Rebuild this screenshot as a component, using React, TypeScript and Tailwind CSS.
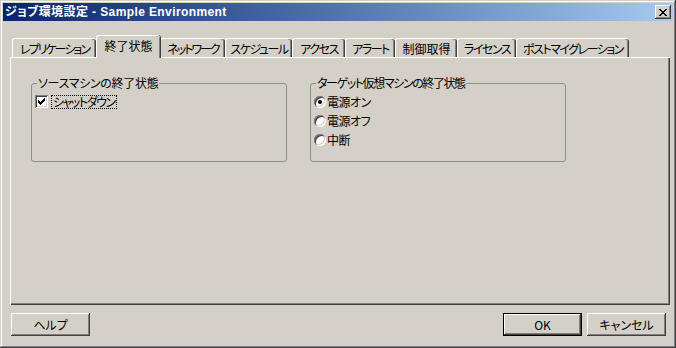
const raised =
  "shadow-[inset_-1px_-1px_#404040,inset_1px_1px_#ffffff,inset_-2px_-2px_#808080,inset_2px_2px_#d4d0c8]";

const tabs = [
  { label: "レプリケーション", w: "w-[84px]", t: "tracking-[-2px]" },
  { label: "終了状態", w: "w-[64px]", t: "", active: true },
  { label: "ネットワーク", w: "w-[65px]", t: "tracking-[-2px]" },
  { label: "スケジュール", w: "w-[67px]", t: "tracking-[-1.5px]" },
  { label: "アクセス", w: "w-[53px]", t: "tracking-[-1.5px]" },
  { label: "アラート", w: "w-[50px]", t: "tracking-[-1.5px]" },
  { label: "制御取得", w: "w-[62px]", t: "" },
  { label: "ライセンス", w: "w-[59px]", t: "tracking-[-1.5px]" },
  { label: "ポストマイグレーション", w: "w-[113px]", t: "tracking-[-1.5px]" },
];

function Tab({ label, w, t, active }: { label: string; w: string; t: string; active?: boolean }) {
  if (active) {
    return (
      <div
        className={`${w} ${t} relative z-10 -mb-px flex h-[23px] shrink-0 items-start justify-center whitespace-nowrap rounded-t-[3px] border-l border-t border-white bg-[#d4d0c8] pt-[1px] [box-shadow:1px_0_#404040,inset_-1px_0_#808080]`}
      >
        {label}
      </div>
    );
  }
  return (
    <div
      className={`${w} ${t} flex h-[19px] shrink-0 items-center justify-center whitespace-nowrap rounded-t-[3px] border-l border-t border-white bg-[#d4d0c8] pt-[1px] [box-shadow:inset_-1px_0_#404040,inset_-2px_0_#808080]`}
    >
      {label}
    </div>
  );
}

function GroupBox({ title, t, children }: { title: string; t: string; children: React.ReactNode }) {
  return (
    <div className="relative h-[79px] w-[256px] rounded-[3px] border border-[#8e8e8e]">
      <span className={`absolute -top-[8px] left-[5px] whitespace-nowrap bg-[#d4d0c8] px-[1px] leading-[14px] ${t}`}>
        {title}
      </span>
      {children}
    </div>
  );
}

function Radio({ label, checked }: { label: string; checked?: boolean }) {
  return (
    <div className="flex h-[19px] items-center">
      <span className="flex size-[12px] items-center justify-center rounded-full bg-white shadow-[inset_1px_1px_#808080,inset_-1px_-1px_#ffffff,inset_2px_2px_#404040,inset_-2px_-2px_#d4d0c8]">
        {checked && <span className="size-[4px] rounded-full bg-black" />}
      </span>
      <span className="ml-[1px] leading-[14px] tracking-[-0.5px]">{label}</span>
    </div>
  );
}

function Button({ label, isDefault, className = "" }: { label: string; isDefault?: boolean; className?: string }) {
  return (
    <div
      className={`flex h-[23px] w-[79px] items-center justify-center bg-[#d4d0c8] ${
        isDefault ? "border border-black" : ""
      } ${className}`}
    >
      <div className={`flex size-full items-center justify-center ${raised}`}>{label}</div>
    </div>
  );
}

export default function App() {
  return (
    <div className="h-[348px] w-[676px] bg-[#d4d0c8] p-[3px] font-['Noto_Sans_CJK_JP',sans-serif] text-[12px] text-black [font-feature-settings:'palt'] shadow-[inset_-1px_-1px_#404040,inset_1px_1px_#d4d0c8,inset_-2px_-2px_#808080,inset_2px_2px_#ffffff]">
      <div className="flex h-[18px] items-center justify-between bg-gradient-to-r from-[#0a246a] to-[#a6caf0] pl-[2px] pr-[2px]">
        <span className="font-['Liberation_Sans','Noto_Sans_CJK_JP',sans-serif] text-[12px] font-bold leading-[16px] tracking-[0.4px] text-white">
          ジョブ環境設定 - Sample Environment
        </span>
        <div className={`flex h-[14px] w-[16px] items-center justify-center bg-[#d4d0c8] ${raised}`}>
          <svg width="8" height="7" viewBox="0 0 8 7" shapeRendering="crispEdges">
            <path d="M0 0h2v1H0zM6 0h2v1H6zM1 1h2v1H1zM5 1h2v1H5zM2 2h4v1H2zM3 3h2v1H3zM2 4h4v1H2zM1 5h2v1H1zM5 5h2v1H5zM0 6h2v1H0zM6 6h2v1H6z" fill="#000" />
          </svg>
        </div>
      </div>

      <div className="pl-[7px] pr-[3px]">
        <div className="mt-[14px] flex h-[22px] items-end pl-[2px]">
          {tabs.map((t) => (
            <Tab key={t.label} {...t} />
          ))}
        </div>
        <div className="flex h-[248px] gap-[23px] pl-[21px] pt-[26px] shadow-[inset_1px_1px_#ffffff,inset_-1px_-1px_#404040,inset_-2px_-2px_#808080]">
          <GroupBox title="ソースマシンの終了状態" t="tracking-[-0.3px]">
            <div className="mt-[11px] flex items-center pl-[3px]">
              <span className="flex size-[13px] items-center justify-center bg-white shadow-[inset_1px_1px_#808080,inset_-1px_-1px_#ffffff,inset_2px_2px_#404040,inset_-2px_-2px_#d4d0c8]">
                <svg width="7" height="7" viewBox="0 0 7 7" shapeRendering="crispEdges">
                  <path d="M6 0h1v3H6zM5 1h1v3H5zM4 2h1v3H4zM3 3h1v3H3zM2 4h1v3H2zM1 3h1v3H1zM0 2h1v3H0z" fill="#000" />
                </svg>
              </span>
              <span className="ml-[4px] px-[1px] leading-[12px] tracking-[-1.5px] outline outline-1 outline-dotted outline-black">
                シャットダウン
              </span>
            </div>
          </GroupBox>
          <GroupBox title="ターゲット仮想マシンの終了状態" t="tracking-[-1.4px]">
            <div className="mt-[8px] pl-[3px]">
              <Radio label="電源オン" checked />
              <Radio label="電源オフ" />
              <Radio label="中断" />
            </div>
          </GroupBox>
        </div>
        <div className="mt-[8px] flex items-center">
          <Button label="ヘルプ" className="ml-[1px]" />
          <div className="ml-auto flex gap-[5px] pr-[4px]">
            <Button label="OK" isDefault />
            <Button label="キャンセル" />
          </div>
        </div>
      </div>
    </div>
  );
}
